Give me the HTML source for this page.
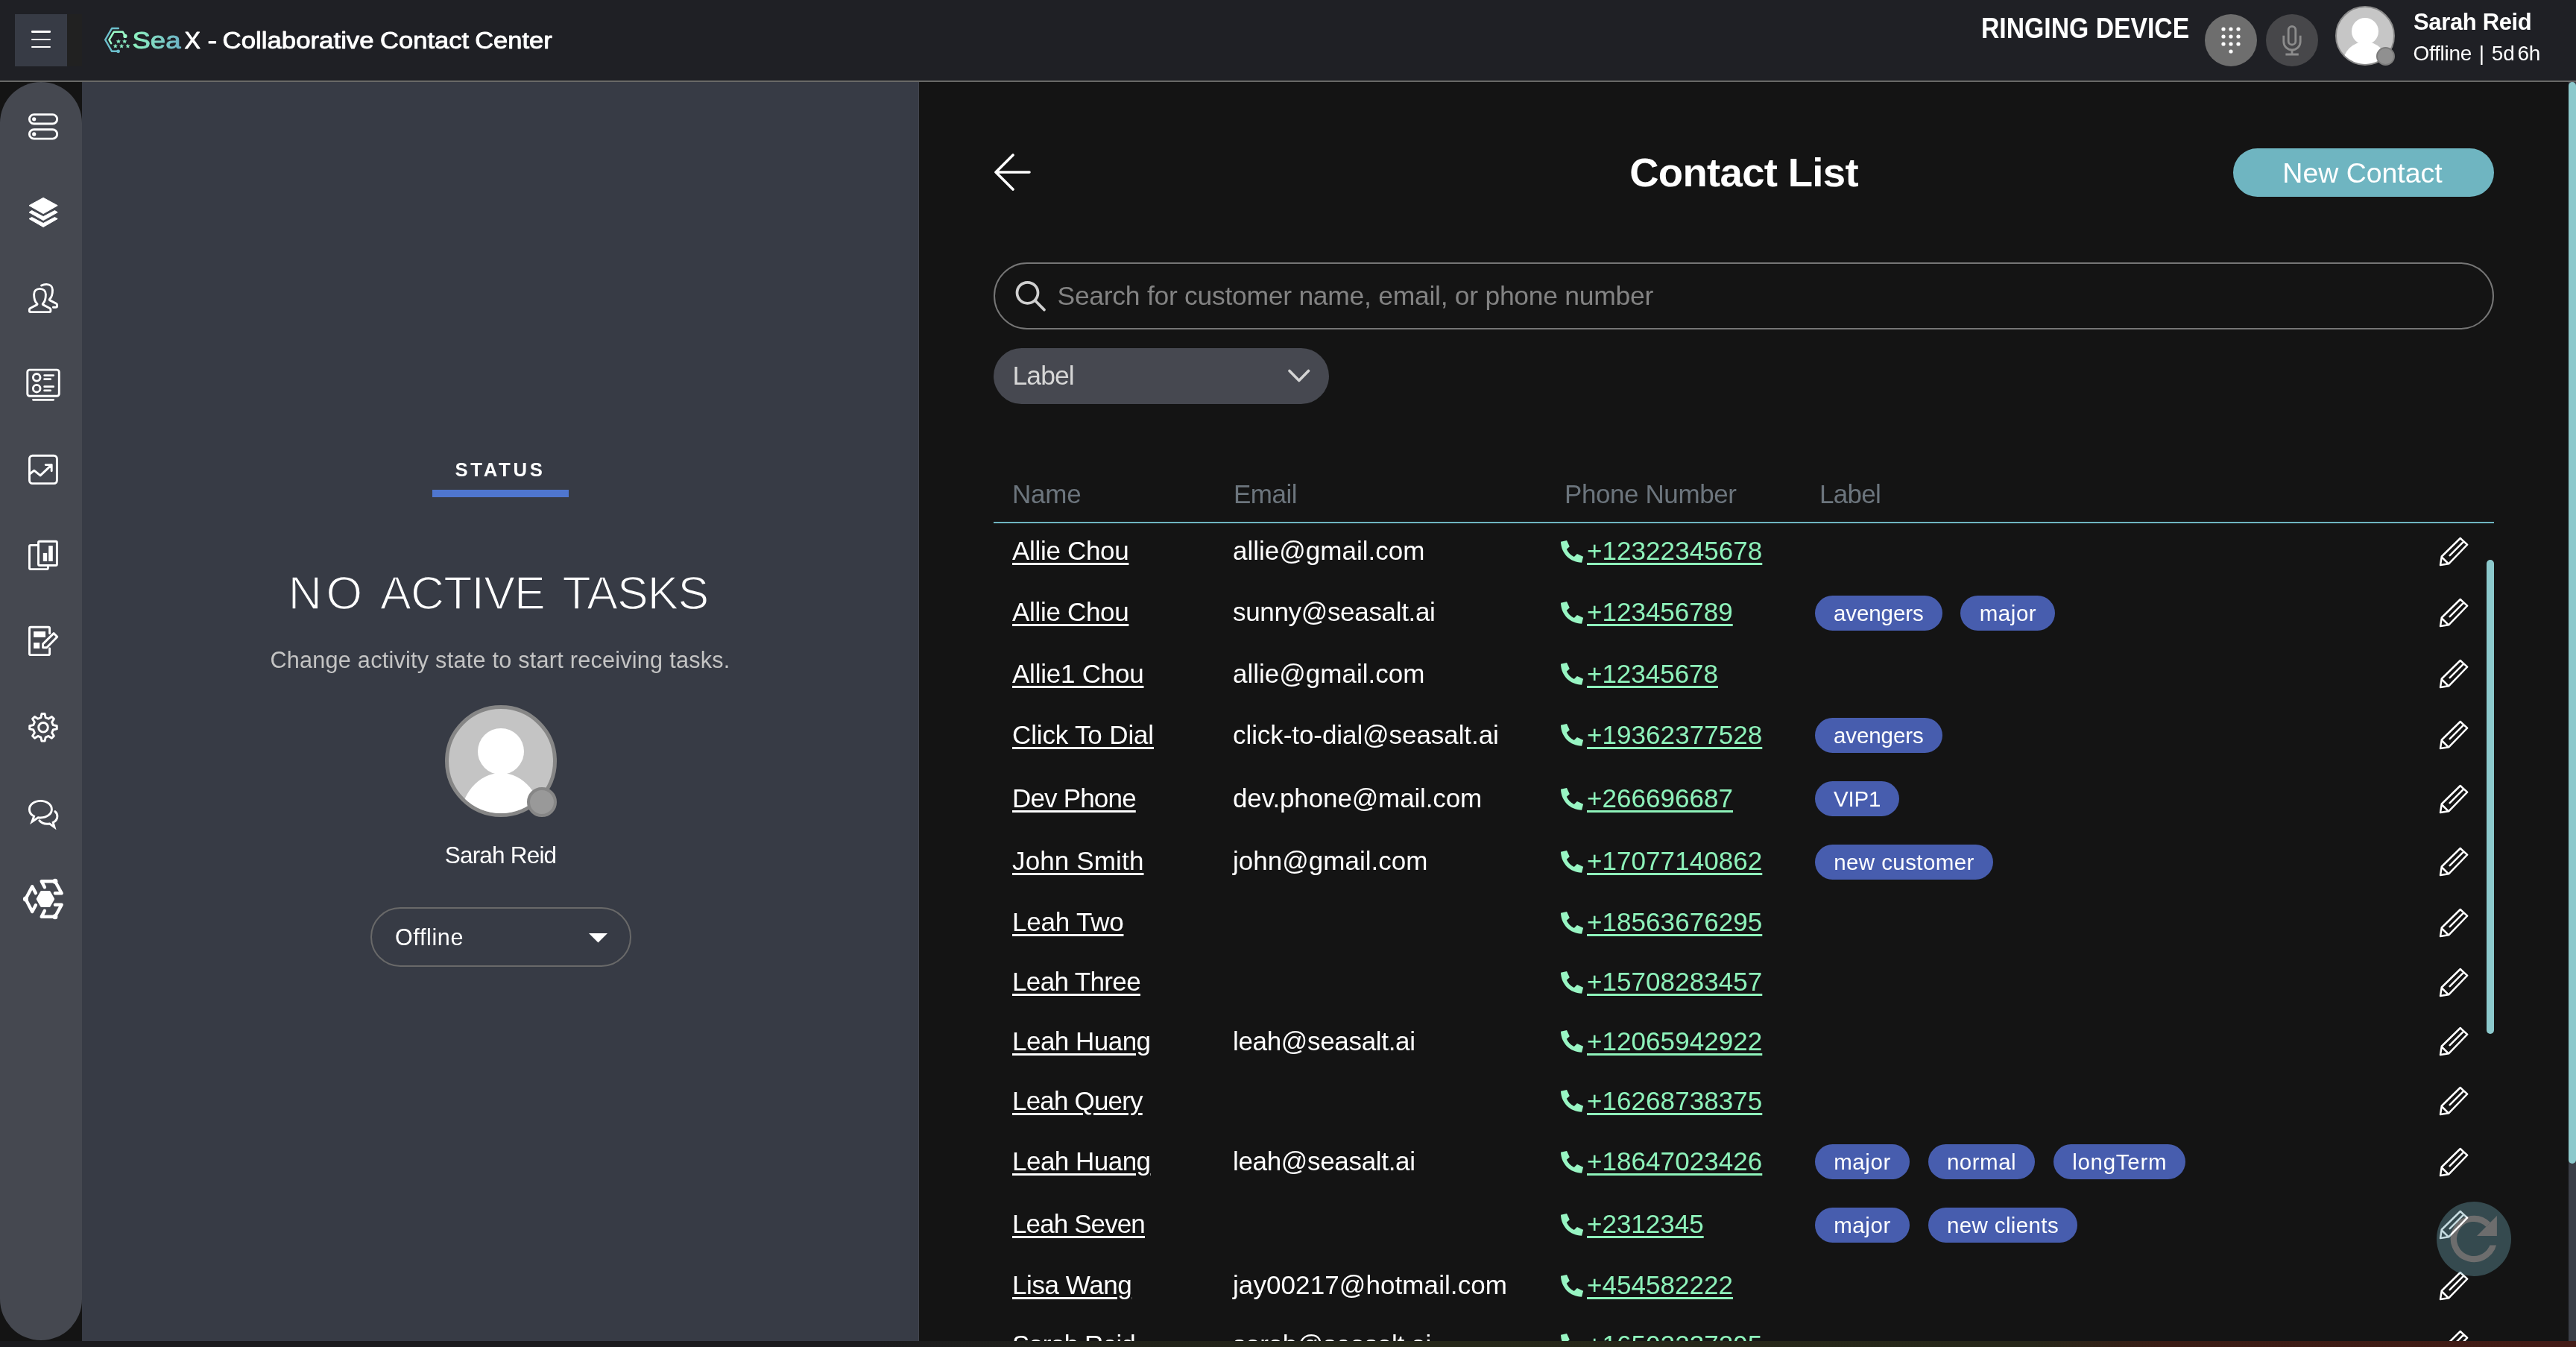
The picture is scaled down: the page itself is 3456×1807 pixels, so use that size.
<!DOCTYPE html>
<html>
<head>
<meta charset="utf-8">
<title>SeaX - Collaborative Contact Center</title>
<style>
*{box-sizing:border-box;margin:0;padding:0}
html,body{width:3456px;height:1807px;overflow:hidden;background:#141414}
body{position:relative;font-family:"Liberation Sans",sans-serif;color:#fff;will-change:transform;filter:opacity(1)}
.abs{position:absolute}
#topbar{position:absolute;left:0;top:0;width:3456px;height:110px;background:#1f2025;border-bottom:2.5px solid #696967}
#ham{position:absolute;left:20px;top:19px;width:70px;height:70px;background:#373b45}
#ham i{position:absolute;left:22px;width:25.5px;height:2.5px;background:#fff;border-radius:1.25px}
#hamdark{position:absolute;left:90px;top:19px;width:20px;height:70px;background:#212121}
#brand{position:absolute;left:179px;top:35px;font-size:32px;line-height:38px;white-space:nowrap;color:#fff;letter-spacing:1px}
#brand .g{background:linear-gradient(90deg,#8ff0c0,#6fb5c5);-webkit-background-clip:text;background-clip:text;color:transparent}
#ring{position:absolute;left:2658px;top:15.5px;font-size:38.5px;line-height:44px;font-weight:bold;white-space:nowrap;transform:scaleX(.876);transform-origin:0 0}
.circ{position:absolute;border-radius:50%}
#uname{position:absolute;left:3238px;top:10px;font-size:31px;line-height:40px;font-weight:bold;white-space:nowrap;letter-spacing:-.35px}
#ustat{position:absolute;left:3237.5px;top:55px;font-size:28px;line-height:34px;white-space:nowrap;letter-spacing:-.25px}
#sidebar{position:absolute;left:0;top:110px;width:110px;height:1688px;background:#454850;border-radius:55px}
#sidebar svg{position:absolute;overflow:visible}
#left{position:absolute;left:110px;top:110px;width:1123px;height:1689px;background:#373b45;border-right:1px solid #43464f}
#main{position:absolute;left:1233px;top:110px;width:2223px;height:1689px;background:#141414}
#strip{position:absolute;left:0;top:1799px;width:3456px;height:8px;background:linear-gradient(90deg,#1b1b1e 0%,#1b1b1e 34%,#20211a 42%,#26281a 55%,#27271a 79%,#3a1c15 84%,#431b16 100%)}
.ctr{position:absolute;white-space:nowrap;transform:translateX(-50%)}
.row{position:absolute;left:1333px;width:2013px;height:80px}
.row > *{position:absolute;white-space:nowrap}
.nm{left:25px;top:14px;font-size:35px;line-height:52px;color:#fff;text-decoration:underline;text-decoration-thickness:2.5px;text-underline-offset:4px}
.em{left:321px;top:14px;font-size:35px;line-height:52px;color:#fff}
.ph{left:796px;top:14px;font-size:35px;line-height:52px;color:#8ef3bb;text-decoration:underline;text-decoration-thickness:2.5px;text-underline-offset:4px}
.pi{left:747px;top:10.7px;width:60px;height:60px}
.lb{left:1102px;top:17.6px;height:47px;display:flex;gap:24.9px}
.lb span{display:block;height:47px;border-radius:23.5px;background:#475dae;color:#fff;font-size:29.5px;line-height:47px;text-align:center;padding:0}
.pen{left:1929px;top:10.7px;width:60px;height:60px}
</style>
</head>
<body>
<div id="topbar">
  <div id="ham"><i style="top:22.4px"></i><i style="top:32.5px"></i><i style="top:42.6px"></i></div>
  <div id="hamdark"></div>
  <svg class="abs" style="left:136px;top:32px" width="44" height="44" viewBox="0 0 44 44"><path d="M22.9,6.05 H14.05 L5.2,21.4 L14.05,36.8 H22.5" fill="none" stroke="#6cbfcc" stroke-width="2.4" stroke-linejoin="round" stroke-linecap="round"/><circle cx="22.6" cy="36.8" r="2.4" fill="#6cbfcc"/><path d="M13.1,26.1 L10.5,21.4 L16.7,10.8 H28.8 L31.9,16.3" fill="none" stroke="#9bfbc8" stroke-width="2.6" stroke-linejoin="round" stroke-linecap="round"/><circle cx="31.9" cy="16.4" r="2.6" fill="#9bfbc8"/><g fill="#8aeec4" stroke="#8aeec4" stroke-width=".5" stroke-linejoin="round"><polygon points="22.90,20.90 23.63,22.59 25.47,22.77 24.09,23.99 24.49,25.78 22.90,24.85 21.31,25.78 21.71,23.99 20.33,22.77 22.17,22.59"/><polygon points="31.20,20.90 31.93,22.59 33.77,22.77 32.39,23.99 32.79,25.78 31.20,24.85 29.61,25.78 30.01,23.99 28.63,22.77 30.47,22.59"/><polygon points="18.80,27.20 19.53,28.89 21.37,29.07 19.99,30.29 20.39,32.08 18.80,31.15 17.21,32.08 17.61,30.29 16.23,29.07 18.07,28.89"/><polygon points="27.10,27.20 27.83,28.89 29.67,29.07 28.29,30.29 28.69,32.08 27.10,31.15 25.51,32.08 25.91,30.29 24.53,29.07 26.37,28.89"/><polygon points="35.50,27.20 36.23,28.89 38.07,29.07 36.69,30.29 37.09,32.08 35.50,31.15 33.91,32.08 34.31,30.29 32.93,29.07 34.77,28.89"/></g></svg>
  <svg id="brandsvg" class="abs" style="left:170px;top:30px;overflow:visible" width="600" height="50" viewBox="0 0 600 50"><defs><linearGradient id="bg" gradientUnits="userSpaceOnUse" x1="9" y1="0" x2="72" y2="0"><stop offset="0" stop-color="#8ff3c1"/><stop offset="1" stop-color="#6db4c6"/></linearGradient></defs><g font-family="Liberation Sans, sans-serif" font-size="32" stroke-width="0.9" stroke-linejoin="round"><text x="7.5" y="35.2" textLength="65" lengthAdjust="spacingAndGlyphs" fill="url(#bg)" stroke="url(#bg)">Sea</text><text x="77.6" y="35.2" textLength="21.4" lengthAdjust="spacingAndGlyphs" fill="#fff" stroke="#fff">X</text><text x="108.5" y="35.2" textLength="12.7" lengthAdjust="spacingAndGlyphs" fill="#fff" stroke="#fff">-</text><text x="128.6" y="35.2" textLength="203" lengthAdjust="spacingAndGlyphs" fill="#fff" stroke="#fff">Collaborative</text><text x="340.1" y="35.2" textLength="119" lengthAdjust="spacingAndGlyphs" fill="#fff" stroke="#fff">Contact</text><text x="467.2" y="35.2" textLength="103.5" lengthAdjust="spacingAndGlyphs" fill="#fff" stroke="#fff">Center</text></g></svg>
  <div id="ring">RINGING DEVICE</div>
  <div class="circ" style="left:2958px;top:19px;width:70px;height:70px;background:#6e6e6e"></div>
  <svg class="abs" style="left:2958px;top:19px" width="70" height="70" viewBox="0 0 70 70"><g fill="#fff"><circle cx="25" cy="20" r="2.6"/><circle cx="35" cy="20" r="2.6"/><circle cx="45" cy="20" r="2.6"/><circle cx="25" cy="30" r="2.6"/><circle cx="35" cy="30" r="2.6"/><circle cx="45" cy="30" r="2.6"/><circle cx="25" cy="40" r="2.6"/><circle cx="35" cy="40" r="2.6"/><circle cx="45" cy="40" r="2.6"/><circle cx="35" cy="50" r="2.6"/></g></svg>
  <div class="circ" style="left:3040px;top:19px;width:70px;height:70px;background:#47474a"></div>
  <svg class="abs" style="left:3040px;top:19px" width="70" height="70" viewBox="0 0 70 70" fill="none" stroke="#8c8c8c" stroke-width="2.8" stroke-linecap="butt"><rect x="30.2" y="16.4" width="9.6" height="24.6" rx="4.8"/><path d="M23.8,28.7 V36.8 a11.2,11.2 0 0 0 22.4,0 V28.7"/><path d="M35 48 v6 M26.4 54 h17.4"/></svg>
  <div class="circ" style="left:3133px;top:8px;width:80px;height:80px;background:#c6c6c6;border:2.5px solid #8a8a8a;overflow:hidden">
    <div class="circ" style="left:20px;top:14px;width:36px;height:36px;background:#fff"></div>
    <div class="circ" style="left:8px;top:46px;width:60px;height:60px;background:#fff"></div>
  </div>
  <div class="circ" style="left:3188px;top:63px;width:25px;height:25px;background:#909090;border:2px solid #7c7c7c"></div>
  <div id="uname">Sarah Reid</div>
  <div id="ustat">Offline <span style="margin-left:2px">|</span> <span style="margin-left:2.6px">5d</span><span style="margin-left:-3.6px"> 6h</span></div>
</div>

<div id="sidebar">
<svg style="left:36px;top:40px" width="44" height="40" viewBox="0 0 44 40"><g stroke="#fff" fill="none" stroke-width="2.9" stroke-linecap="round" stroke-linejoin="round" stroke-width="2.7"><rect x="3.4" y="3.6" width="37.3" height="12.4" rx="6.2"/><rect x="3.4" y="23.7" width="37.3" height="12.4" rx="6.2"/></g><circle cx="9.7" cy="9.8" r="2.6" fill="#fff"/><circle cx="9.7" cy="29.9" r="2.6" fill="#fff"/></svg>
<svg style="left:28px;top:145px" width="60" height="60" viewBox="0 0 60 60"><g fill="#fff" stroke="#fff" stroke-width="1" stroke-linejoin="round"><path d="M30.1,10.3 L49.2,20.7 L30.1,31.6 L11,20.7Z"/><path d="M11,29.8 L14.7,27.5 L30.1,35.6 L45.4,27.5 L49.2,29.8 L30.1,40.6Z"/><path d="M11,38.5 L14.7,36.5 L30.1,44.5 L45.4,36.5 L49.2,38.5 L30.1,49.5Z"/></g></svg>
<svg style="left:28px;top:260px" width="60" height="60" viewBox="0 0 60 60"><g stroke="#fff" fill="none" stroke-width="2.9" stroke-linecap="round" stroke-linejoin="round"><path d="M25.4,17.4 C20.5,17.4 17.6,20.5 17.6,25 C17.6,31 19,35 21.8,37.5 C22.3,38 22,38.6 21.4,38.9 L12.5,43.5 C11.6,44 11.4,44.4 11.4,45.5 V47.6 C11.4,48.3 11.8,48.6 12.4,48.6 H38.9 C39.5,48.6 39.9,48.3 39.9,47.6 V45.5 C39.9,44.4 39.7,44 38.8,43.5 L29.9,38.9 C29.2,38.5 29,38 29.5,37.5 C32,35 33.4,31 33.4,25 C33.4,20.5 30.5,17.4 25.4,17.4 Z"/><path d="M27.6,13.1 C29.5,12 31.5,11.4 34.3,11.4 C39.5,11.4 42.5,14.5 42.5,19 C42.5,25 41,29 38.6,31.2 C38,31.8 38.2,32.5 39,32.9 L47.5,37.3 C48.4,37.8 48.6,38.3 48.6,39.3 V40.5 C48.6,41.8 47.8,42.3 46.5,42.3 H43.4"/></g></svg>
<svg style="left:28px;top:376px" width="60" height="60" viewBox="0 0 60 60"><g stroke="#fff" fill="none" stroke-width="2.9" stroke-linecap="round" stroke-linejoin="round"><rect x="8.8" y="10.1" width="42.5" height="35.2" rx="3"/><circle cx="21.2" cy="20.3" r="4.8"/><circle cx="21.2" cy="35.2" r="4.8"/><g stroke-width="2.7"><path d="M31.6,17.6 H43.7 M31.6,22.7 H39.7 M31.6,32.7 H43.7 M31.6,37.9 H39.7 M16.4,50.3 H43.7"/></g></g></svg>
<svg style="left:28px;top:490px" width="60" height="60" viewBox="0 0 60 60"><g stroke="#fff" fill="none" stroke-width="2.9" stroke-linecap="round" stroke-linejoin="round"><rect x="11.5" y="11.3" width="36.9" height="37.3" rx="4"/><path d="M11.8,36 L17.8,31.2 L26.1,37.9 L41.2,23.6 M33.2,23.6 H41.2 V31.8"/></g></svg>
<svg style="left:28px;top:605px" width="60" height="60" viewBox="0 0 60 60"><g stroke="#fff" fill="none" stroke-width="2.9" stroke-linecap="round" stroke-linejoin="round"><rect x="11.5" y="16.4" width="24.9" height="32.2" rx="1.6"/><rect x="23.5" y="11.3" width="24.9" height="32.2" rx="1.6" fill="#454850"/></g><rect x="29.8" y="26.9" width="5.4" height="11" fill="#fff"/><rect x="37.2" y="17.1" width="5.6" height="20.8" fill="#fff"/></svg>
<svg style="left:28px;top:720px" width="60" height="60" viewBox="0 0 60 60"><g stroke="#fff" fill="none" stroke-width="2.9" stroke-linecap="round" stroke-linejoin="round"><path d="M38.6,19.8 V13 a1.7,1.7 0 0 0 -1.7,-1.7 H13.2 a1.7,1.7 0 0 0 -1.7,1.7 V46.9 a1.7,1.7 0 0 0 1.7,1.7 H36.9 a1.7,1.7 0 0 0 1.7,-1.7 V40"/><path d="M29.6,38.8 V33.9 L44.1,19.6 L48.8,24.3 L34.7,38.8 Z"/></g><rect x="17.1" y="17.1" width="15.9" height="7.8" fill="#fff"/><rect x="17.1" y="32.1" width="8.1" height="7.8" fill="#fff"/></svg>
<svg style="left:28px;top:836px" width="60" height="60" viewBox="0 0 60 60"><g stroke="#fff" fill="none" stroke-width="2.9" stroke-linecap="round" stroke-linejoin="round"><path d="M26.83,16.63 L27.92,11.57 L32.08,11.57 L33.17,16.63 L37.11,18.25 L41.45,15.45 L44.40,18.40 L41.60,22.74 L43.22,26.68 L48.28,27.77 L48.28,31.93 L43.22,33.02 L41.60,36.96 L44.40,41.30 L41.45,44.25 L37.11,41.45 L33.17,43.07 L32.08,48.13 L27.92,48.13 L26.83,43.07 L22.89,41.45 L18.55,44.25 L15.60,41.30 L18.40,36.96 L16.78,33.02 L11.72,31.93 L11.72,27.77 L16.78,26.68 L18.40,22.74 L15.60,18.40 L18.55,15.45 L22.89,18.25Z"/><circle cx="30" cy="29.85" r="6.3"/></g></svg>
<svg style="left:28px;top:951px" width="60" height="60" viewBox="0 0 60 60"><g stroke="#fff" fill="none" stroke-width="2.9" stroke-linecap="round" stroke-linejoin="round" stroke-width="2.8"><path d="M23.2,35.8 L15,41.4 L17.6,34 C13.5,32 11.4,28.7 11.4,24.7 C11.4,18.4 18,13.4 26.4,13.4 C34.8,13.4 41.4,18.4 41.4,24.7 C41.4,31 34.8,36 26.4,36 C25.3,36 24.2,35.95 23.2,35.8 Z" stroke-linejoin="miter"/><path d="M45.9,27.6 C47.8,29.2 48.9,31.4 48.9,33.9 C48.9,37.5 46.6,40.6 43.2,42.3 L45,48.6 L38.6,44 C37.5,44.2 36.3,44.3 35,44.3 C31,44.3 27.3,42.6 24.9,39.8" stroke-linejoin="miter"/></g></svg>
<svg style="left:24px;top:1060px" width="70" height="72" viewBox="0 0 70 72"><g stroke="#fff" fill="none" stroke-width="4.4" stroke-linecap="round" stroke-linejoin="round"><path d="M23.9,28.1 L19.2,19.2 L10.4,36.1 L19.2,53 L23.9,44.2"/><path d="M35.9,20.3 L31.7,12.2 H49.9 L58.7,28.3 H49.9"/><path d="M35.9,51.8 L31.7,59.8 H49.9 L58.7,43.7 H49.9"/><path d="M26.2,36 L31.6,26.6 H42.2 L47.6,36 L42.2,45.4 H31.6 Z" fill="#fff" stroke-width="3"/></g><g fill="#fff"><circle cx="10.4" cy="36.1" r="3.5"/><circle cx="49.9" cy="12.2" r="3.5"/><circle cx="49.9" cy="59.8" r="3.5"/></g></svg>
</div>

<div id="left">
<div id="st" class="ctr" style="left:561px;top:504.7415px;font-size:25.7px;line-height:30px;font-weight:bold;letter-spacing:3.7px">STATUS</div>
<div class="abs" style="left:470px;top:547px;width:183px;height:10px;background:#4f76cf"></div>
<div id="nat_NO" class="abs" style="left:276.80px;top:653.5px;font-size:62.5px;line-height:62px;letter-spacing:5.60px;white-space:nowrap;-webkit-text-stroke:1.5px #373b45">NO</div>
<div id="nat_ACTIVE" class="abs" style="left:400.00px;top:653.5px;font-size:62.5px;line-height:62px;letter-spacing:-0.80px;white-space:nowrap;-webkit-text-stroke:1.5px #373b45">ACTIVE</div>
<div id="nat_TASKS" class="abs" style="left:644.60px;top:653.5px;font-size:62.5px;line-height:62px;letter-spacing:-0.95px;white-space:nowrap;-webkit-text-stroke:1.5px #373b45">TASKS</div>
<div id="sub" class="ctr" style="left:561px;top:756.5px;font-size:30.6px;line-height:36px;letter-spacing:.25px;color:#c4c4c4">Change activity state to start receiving tasks.</div>
<div class="circ" style="left:487px;top:836px;width:150px;height:150px;background:#c4c4c4;border:5px solid #868686;overflow:hidden"><div class="circ" style="left:39px;top:25.600000000000023px;width:62px;height:62px;background:#fff"></div><div class="circ" style="left:15px;top:85.59999999999991px;width:110px;height:132px;background:#fff"></div></div>
<div class="circ" style="left:597.2px;top:946px;width:40px;height:40px;background:#999;border:4.5px solid #868686"></div>
<div id="sr" class="ctr" style="left:561.5px;top:1017px;font-size:31.5px;line-height:40px;letter-spacing:-.8px">Sarah Reid</div>
<div class="abs" style="left:387px;top:1107px;width:350px;height:80px;border:2px solid #696969;border-radius:40px"></div>
<div id="off" class="abs" style="left:420px;top:1127px;font-size:30.5px;line-height:40px;letter-spacing:.63px;white-space:nowrap">Offline</div>
<svg class="abs" style="left:679.5px;top:1142px" width="25" height="13" viewBox="0 0 25 13"><path d="M0,0 H25 L12.5,12.5Z" fill="#fff"/></svg>
</div>

<div id="main"></div>
<!--MAIN-->
<svg class="abs" style="left:1328px;top:201px" width="60" height="60" viewBox="0 0 60 60"><path d="M53,30 H8 M31,7 L8,30 L31,53" fill="none" stroke="#fff" stroke-width="3.6" stroke-linecap="round" stroke-linejoin="round"/></svg>
<div id="title" class="ctr" style="left:2339.5px;top:199.5px;font-size:54.5px;line-height:64px;font-weight:bold;letter-spacing:-0.68px;">Contact List</div>
<div class="abs" style="left:2996px;top:199px;width:350px;height:65px;border-radius:32.5px;background:#6fb5c1"></div>
<div id="newc" class="ctr" style="left:3169.5px;top:208px;font-size:37.5px;line-height:48px;letter-spacing:-0.03px;">New Contact</div>
<div class="abs" style="left:1333px;top:352px;width:2013px;height:90px;border:2.2px solid #767676;border-radius:45px"></div>
<svg class="abs" style="left:1358px;top:372px" width="50" height="50" viewBox="0 0 50 50"><g fill="none" stroke="#d0d0d0" stroke-width="3.7" stroke-linecap="round"><circle cx="20.5" cy="20.8" r="14"/><path d="M30.8,31.2 L43,43.6"/></g></svg>
<div id="ph" class="abs" style="left:1418.5px;top:372px;font-size:35.5px;line-height:50px;color:#838383;white-space:nowrap;letter-spacing:-0.28px;">Search for customer name, email, or phone number</div>
<div class="abs" style="left:1333px;top:467px;width:450px;height:75px;border-radius:37.5px;background:#464850"></div>
<div id="lbl" class="abs" style="left:1358.5px;top:479px;font-size:35.5px;line-height:50px;color:#d6d6d6;white-space:nowrap;letter-spacing:-0.92px;">Label</div>
<svg class="abs" style="left:1723px;top:489px" width="40" height="30" viewBox="0 0 40 30"><path d="M7,8.5 L19.8,21.5 L32.5,8.5" fill="none" stroke="#d4d4d4" stroke-width="3.6" stroke-linecap="round" stroke-linejoin="round"/></svg>
<div id="h0" class="abs" style="left:1358px;top:636.6px;font-size:35px;line-height:52px;color:#6c757d;white-space:nowrap;letter-spacing:-0.25px;">Name</div>
<div id="h1" class="abs" style="left:1655px;top:636.6px;font-size:35px;line-height:52px;color:#6c757d;white-space:nowrap;letter-spacing:-0.50px;">Email</div>
<div id="h2" class="abs" style="left:2099px;top:636.6px;font-size:35px;line-height:52px;color:#6c757d;white-space:nowrap;letter-spacing:-0.41px;">Phone Number</div>
<div id="h3" class="abs" style="left:2441px;top:636.6px;font-size:35px;line-height:52px;color:#6c757d;white-space:nowrap;letter-spacing:-0.72px;">Label</div>
<div class="abs" style="left:1333px;top:699.5px;width:2013px;height:2.5px;background:#6fb5c1"></div>
<div class="row" id="r0" style="top:699.3px"><span class="nm" style="letter-spacing:-0.31px;">Allie Chou</span><span class="em" style="letter-spacing:0.01px;">allie@gmail.com</span><svg class="pi" viewBox="0 0 60 60"><path d="M14,16.7 L22,14.9 L25.8,23.2 L21.8,26.7 C24,31.5 27,34.5 31.8,37 L35.9,33 L44.1,36.7 L42.1,44.8 C26,44 14.5,32.5 14,16.7 Z" fill="#98f5c3"/></svg><span class="ph" style="letter-spacing:0.06px;">+12322345678</span><svg class="pen" viewBox="0 0 60 60"><path d="M12,48.1 L13.8,36.5 L38.8,12 L48.1,20.7 L23.2,46.3 Z M14,37.5 L22.5,45.8 M24.7,35.2 L43.2,16.6" fill="none" stroke="#fff" stroke-width="2.5" stroke-linecap="round" stroke-linejoin="round"/></svg></div>
<div class="row" id="r1" style="top:781.2px"><span class="nm" style="letter-spacing:-0.31px;">Allie Chou</span><span class="em" style="letter-spacing:-0.33px;">sunny@seasalt.ai</span><svg class="pi" viewBox="0 0 60 60"><path d="M14,16.7 L22,14.9 L25.8,23.2 L21.8,26.7 C24,31.5 27,34.5 31.8,37 L35.9,33 L44.1,36.7 L42.1,44.8 C26,44 14.5,32.5 14,16.7 Z" fill="#98f5c3"/></svg><span class="ph" style="letter-spacing:0.01px;">+123456789</span><div class="lb" style="margin-top:0px"><span style="width:170.6px;letter-spacing:-0.1px">avengers</span><span style="width:127px;letter-spacing:0.55px">major</span></div><svg class="pen" viewBox="0 0 60 60"><path d="M12,48.1 L13.8,36.5 L38.8,12 L48.1,20.7 L23.2,46.3 Z M14,37.5 L22.5,45.8 M24.7,35.2 L43.2,16.6" fill="none" stroke="#fff" stroke-width="2.5" stroke-linecap="round" stroke-linejoin="round"/></svg></div>
<div class="row" id="r2" style="top:863.6px"><span class="nm" style="letter-spacing:-0.23px;">Allie1 Chou</span><span class="em" style="letter-spacing:0.01px;">allie@gmail.com</span><svg class="pi" viewBox="0 0 60 60"><path d="M14,16.7 L22,14.9 L25.8,23.2 L21.8,26.7 C24,31.5 27,34.5 31.8,37 L35.9,33 L44.1,36.7 L42.1,44.8 C26,44 14.5,32.5 14,16.7 Z" fill="#98f5c3"/></svg><span class="ph" style="letter-spacing:-0.02px;">+12345678</span><svg class="pen" viewBox="0 0 60 60"><path d="M12,48.1 L13.8,36.5 L38.8,12 L48.1,20.7 L23.2,46.3 Z M14,37.5 L22.5,45.8 M24.7,35.2 L43.2,16.6" fill="none" stroke="#fff" stroke-width="2.5" stroke-linecap="round" stroke-linejoin="round"/></svg></div>
<div class="row" id="r3" style="top:945.6px"><span class="nm" style="letter-spacing:-0.15px;">Click To Dial</span><span class="em" style="letter-spacing:-0.07px;">click-to-dial@seasalt.ai</span><svg class="pi" viewBox="0 0 60 60"><path d="M14,16.7 L22,14.9 L25.8,23.2 L21.8,26.7 C24,31.5 27,34.5 31.8,37 L35.9,33 L44.1,36.7 L42.1,44.8 C26,44 14.5,32.5 14,16.7 Z" fill="#98f5c3"/></svg><span class="ph" style="letter-spacing:0.06px;">+19362377528</span><div class="lb" style="margin-top:0px"><span style="width:170.6px;letter-spacing:-0.1px">avengers</span></div><svg class="pen" viewBox="0 0 60 60"><path d="M12,48.1 L13.8,36.5 L38.8,12 L48.1,20.7 L23.2,46.3 Z M14,37.5 L22.5,45.8 M24.7,35.2 L43.2,16.6" fill="none" stroke="#fff" stroke-width="2.5" stroke-linecap="round" stroke-linejoin="round"/></svg></div>
<div class="row" id="r4" style="top:1031.1px"><span class="nm" style="letter-spacing:-0.82px;">Dev Phone</span><span class="em" style="letter-spacing:-0.13px;">dev.phone@mail.com</span><svg class="pi" viewBox="0 0 60 60"><path d="M14,16.7 L22,14.9 L25.8,23.2 L21.8,26.7 C24,31.5 27,34.5 31.8,37 L35.9,33 L44.1,36.7 L42.1,44.8 C26,44 14.5,32.5 14,16.7 Z" fill="#98f5c3"/></svg><span class="ph" style="letter-spacing:0.04px;">+266696687</span><div class="lb" style="margin-top:-0.8px"><span style="width:113.2px;letter-spacing:-0.2px">VIP1</span></div><svg class="pen" viewBox="0 0 60 60"><path d="M12,48.1 L13.8,36.5 L38.8,12 L48.1,20.7 L23.2,46.3 Z M14,37.5 L22.5,45.8 M24.7,35.2 L43.2,16.6" fill="none" stroke="#fff" stroke-width="2.5" stroke-linecap="round" stroke-linejoin="round"/></svg></div>
<div class="row" id="r5" style="top:1114.9px"><span class="nm" style="letter-spacing:0.14px;">John Smith</span><span class="em" style="letter-spacing:0.02px;">john@gmail.com</span><svg class="pi" viewBox="0 0 60 60"><path d="M14,16.7 L22,14.9 L25.8,23.2 L21.8,26.7 C24,31.5 27,34.5 31.8,37 L35.9,33 L44.1,36.7 L42.1,44.8 C26,44 14.5,32.5 14,16.7 Z" fill="#98f5c3"/></svg><span class="ph" style="letter-spacing:0.06px;">+17077140862</span><div class="lb" style="margin-top:0.5px"><span style="width:239px;letter-spacing:0.42px">new customer</span></div><svg class="pen" viewBox="0 0 60 60"><path d="M12,48.1 L13.8,36.5 L38.8,12 L48.1,20.7 L23.2,46.3 Z M14,37.5 L22.5,45.8 M24.7,35.2 L43.2,16.6" fill="none" stroke="#fff" stroke-width="2.5" stroke-linecap="round" stroke-linejoin="round"/></svg></div>
<div class="row" id="r6" style="top:1197.4px"><span class="nm" style="letter-spacing:-0.21px;">Leah Two</span><svg class="pi" viewBox="0 0 60 60"><path d="M14,16.7 L22,14.9 L25.8,23.2 L21.8,26.7 C24,31.5 27,34.5 31.8,37 L35.9,33 L44.1,36.7 L42.1,44.8 C26,44 14.5,32.5 14,16.7 Z" fill="#98f5c3"/></svg><span class="ph" style="letter-spacing:0.06px;">+18563676295</span><svg class="pen" viewBox="0 0 60 60"><path d="M12,48.1 L13.8,36.5 L38.8,12 L48.1,20.7 L23.2,46.3 Z M14,37.5 L22.5,45.8 M24.7,35.2 L43.2,16.6" fill="none" stroke="#fff" stroke-width="2.5" stroke-linecap="round" stroke-linejoin="round"/></svg></div>
<div class="row" id="r7" style="top:1277.2px"><span class="nm" style="letter-spacing:-0.64px;">Leah Three</span><svg class="pi" viewBox="0 0 60 60"><path d="M14,16.7 L22,14.9 L25.8,23.2 L21.8,26.7 C24,31.5 27,34.5 31.8,37 L35.9,33 L44.1,36.7 L42.1,44.8 C26,44 14.5,32.5 14,16.7 Z" fill="#98f5c3"/></svg><span class="ph" style="letter-spacing:0.06px;">+15708283457</span><svg class="pen" viewBox="0 0 60 60"><path d="M12,48.1 L13.8,36.5 L38.8,12 L48.1,20.7 L23.2,46.3 Z M14,37.5 L22.5,45.8 M24.7,35.2 L43.2,16.6" fill="none" stroke="#fff" stroke-width="2.5" stroke-linecap="round" stroke-linejoin="round"/></svg></div>
<div class="row" id="r8" style="top:1356.5px"><span class="nm" style="letter-spacing:-0.52px;">Leah Huang</span><span class="em" style="letter-spacing:-0.33px;">leah@seasalt.ai</span><svg class="pi" viewBox="0 0 60 60"><path d="M14,16.7 L22,14.9 L25.8,23.2 L21.8,26.7 C24,31.5 27,34.5 31.8,37 L35.9,33 L44.1,36.7 L42.1,44.8 C26,44 14.5,32.5 14,16.7 Z" fill="#98f5c3"/></svg><span class="ph" style="letter-spacing:0.06px;">+12065942922</span><svg class="pen" viewBox="0 0 60 60"><path d="M12,48.1 L13.8,36.5 L38.8,12 L48.1,20.7 L23.2,46.3 Z M14,37.5 L22.5,45.8 M24.7,35.2 L43.2,16.6" fill="none" stroke="#fff" stroke-width="2.5" stroke-linecap="round" stroke-linejoin="round"/></svg></div>
<div class="row" id="r9" style="top:1436.6px"><span class="nm" style="letter-spacing:-0.82px;">Leah Query</span><svg class="pi" viewBox="0 0 60 60"><path d="M14,16.7 L22,14.9 L25.8,23.2 L21.8,26.7 C24,31.5 27,34.5 31.8,37 L35.9,33 L44.1,36.7 L42.1,44.8 C26,44 14.5,32.5 14,16.7 Z" fill="#98f5c3"/></svg><span class="ph" style="letter-spacing:0.06px;">+16268738375</span><svg class="pen" viewBox="0 0 60 60"><path d="M12,48.1 L13.8,36.5 L38.8,12 L48.1,20.7 L23.2,46.3 Z M14,37.5 L22.5,45.8 M24.7,35.2 L43.2,16.6" fill="none" stroke="#fff" stroke-width="2.5" stroke-linecap="round" stroke-linejoin="round"/></svg></div>
<div class="row" id="r10" style="top:1518.2px"><span class="nm" style="letter-spacing:-0.52px;">Leah Huang</span><span class="em" style="letter-spacing:-0.33px;">leah@seasalt.ai</span><svg class="pi" viewBox="0 0 60 60"><path d="M14,16.7 L22,14.9 L25.8,23.2 L21.8,26.7 C24,31.5 27,34.5 31.8,37 L35.9,33 L44.1,36.7 L42.1,44.8 C26,44 14.5,32.5 14,16.7 Z" fill="#98f5c3"/></svg><span class="ph" style="letter-spacing:0.06px;">+18647023426</span><div class="lb" style="margin-top:-0.8px"><span style="width:127px;letter-spacing:0.55px">major</span><span style="width:143.3px;letter-spacing:0.5px">normal</span><span style="width:177.3px;letter-spacing:0.7px">longTerm</span></div><svg class="pen" viewBox="0 0 60 60"><path d="M12,48.1 L13.8,36.5 L38.8,12 L48.1,20.7 L23.2,46.3 Z M14,37.5 L22.5,45.8 M24.7,35.2 L43.2,16.6" fill="none" stroke="#fff" stroke-width="2.5" stroke-linecap="round" stroke-linejoin="round"/></svg></div>
<div class="row" id="r11" style="top:1601.9px"><span class="nm" style="letter-spacing:-0.89px;">Leah Seven</span><svg class="pi" viewBox="0 0 60 60"><path d="M14,16.7 L22,14.9 L25.8,23.2 L21.8,26.7 C24,31.5 27,34.5 31.8,37 L35.9,33 L44.1,36.7 L42.1,44.8 C26,44 14.5,32.5 14,16.7 Z" fill="#98f5c3"/></svg><span class="ph" style="">+2312345</span><div class="lb" style="margin-top:0.6px"><span style="width:127px;letter-spacing:0.55px">major</span><span style="width:200.3px;letter-spacing:0.38px">new clients</span></div><svg class="pen" viewBox="0 0 60 60"><path d="M12,48.1 L13.8,36.5 L38.8,12 L48.1,20.7 L23.2,46.3 Z M14,37.5 L22.5,45.8 M24.7,35.2 L43.2,16.6" fill="none" stroke="#fff" stroke-width="2.5" stroke-linecap="round" stroke-linejoin="round"/></svg></div>
<div class="row" id="r12" style="top:1683.9px"><span class="nm" style="letter-spacing:-0.42px;">Lisa Wang</span><span class="em" style="letter-spacing:0.09px;">jay00217@hotmail.com</span><svg class="pi" viewBox="0 0 60 60"><path d="M14,16.7 L22,14.9 L25.8,23.2 L21.8,26.7 C24,31.5 27,34.5 31.8,37 L35.9,33 L44.1,36.7 L42.1,44.8 C26,44 14.5,32.5 14,16.7 Z" fill="#98f5c3"/></svg><span class="ph" style="letter-spacing:0.04px;">+454582222</span><svg class="pen" viewBox="0 0 60 60"><path d="M12,48.1 L13.8,36.5 L38.8,12 L48.1,20.7 L23.2,46.3 Z M14,37.5 L22.5,45.8 M24.7,35.2 L43.2,16.6" fill="none" stroke="#fff" stroke-width="2.5" stroke-linecap="round" stroke-linejoin="round"/></svg></div>
<div class="row" id="r13" style="top:1763.5px"><span class="nm" style="letter-spacing:-1.03px;">Sarah Reid</span><span class="em" style="letter-spacing:-0.31px;">sarah@seasalt.ai</span><svg class="pi" viewBox="0 0 60 60"><path d="M14,16.7 L22,14.9 L25.8,23.2 L21.8,26.7 C24,31.5 27,34.5 31.8,37 L35.9,33 L44.1,36.7 L42.1,44.8 C26,44 14.5,32.5 14,16.7 Z" fill="#98f5c3"/></svg><span class="ph" style="letter-spacing:0.06px;">+16502237295</span><svg class="pen" viewBox="0 0 60 60"><path d="M12,48.1 L13.8,36.5 L38.8,12 L48.1,20.7 L23.2,46.3 Z M14,37.5 L22.5,45.8 M24.7,35.2 L43.2,16.6" fill="none" stroke="#fff" stroke-width="2.5" stroke-linecap="round" stroke-linejoin="round"/></svg></div>
<div class="abs" style="left:3336px;top:751px;width:10px;height:636px;border-radius:5px;background:#8cc9cc"></div>
<div class="abs" style="left:3445.5px;top:110px;width:10.5px;height:1689px;background:#3a3e47"></div>
<div class="abs" style="left:3445.5px;top:110px;width:10.5px;height:1451px;border-radius:5px;background:#8cc9cc"></div>
<div class="abs" style="left:3259px;top:1602px;width:120px;height:120px;opacity:.38"><div class="circ" style="left:10px;top:10px;width:100px;height:100px;background:#6ba3b0"></div><svg class="abs" style="left:0;top:0" width="120" height="120" viewBox="0 0 120 120"><clipPath id="rc"><path d="M0,0H120V120H0Z M60,50H120V68.6H60Z" clip-rule="evenodd"/></clipPath><path d="M79.2,40.8 A27.1,27.1 0 1 0 87.1,60" fill="none" stroke="#fff" stroke-width="8.2" clip-path="url(#rc)"/><path d="M90.9,29 V55.9 H64.1 Z" fill="#fff"/></svg></div>
<!--/MAIN-->
<div id="strip"></div>
</body>
</html>
